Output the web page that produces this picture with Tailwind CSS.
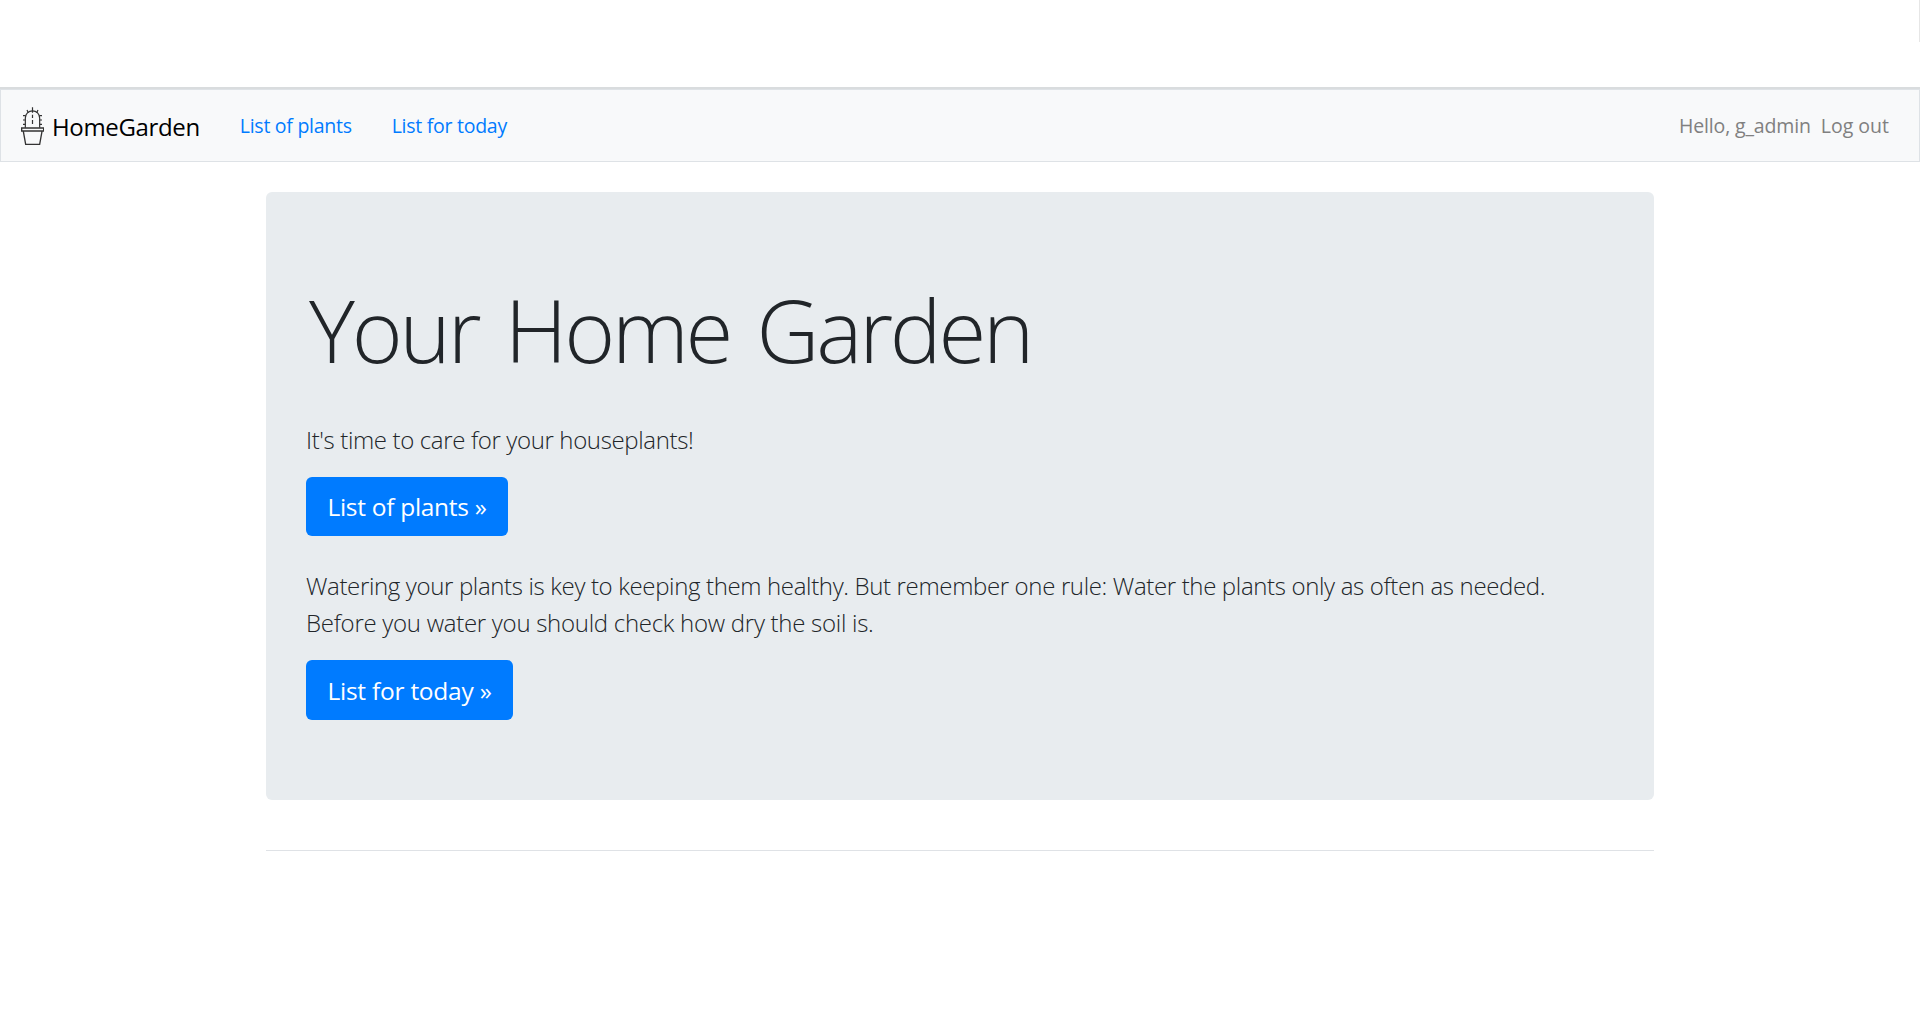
<!DOCTYPE html>
<html lang="en">
<head>
<meta charset="utf-8">
<title>HomeGarden</title>
<script src="https://cdn.jsdelivr.net/npm/@tailwindcss/browser@4"></script>
</head>
<body class="h-[1030px] overflow-hidden bg-white font-['Open_Sans',sans-serif] text-[#212529]">
<div class="flex h-[87px] items-start justify-end"><div class="h-[42px] w-px bg-[#e6e6e6]"></div></div>
<header class="border-t-2 border-[#d9dcde]">
  <nav class="flex h-[73px] items-center border border-[#dee2e6] bg-[#f8f9fa] pr-[30px] pl-[18px]">
    <a class="flex items-center text-black" href="#">
      <svg class="mt-px h-[38px] w-[25px]" viewBox="12 18 75 114" fill="none" stroke="#333" stroke-width="3.6">
        <path d="M31 80V51a21 21 0 0 1 43 0V80"/>
        <path d="M52.500 19v16M52.500 41v10M52.500 57v12M36 27l4 8M69 27l-4 8M24 44h8M73 44h8M24 57h7M74 57h7M24 70h7M74 70h7"/>
        <path d="M20 81h66v9H20zM25 91l7 39h42l7-39" stroke-width="4"/>
      </svg>
      <span class="ml-[8px] pt-[2px] text-[24px] leading-[38px] tracking-[-0.35px]">HomeGarden</span>
    </a>
    <a class="ml-[40px] text-[19.5px] leading-[30px] tracking-[-0.27px] text-[#007bff]" href="#">List of plants</a>
    <a class="ml-[40px] text-[19.5px] leading-[30px] tracking-[-0.27px] text-[#007bff]" href="#">List for today</a>
    <div class="ml-auto flex gap-[10px] text-[19.5px] leading-[30px] text-[#808080]">
      <span class="tracking-[-0.15px]">Hello, g_admin</span>
      <a href="#">Log out</a>
    </div>
  </nav>
</header>
<main class="mx-auto mt-[30px] w-[1388px]">
  <section class="h-[608px] rounded-[6px] bg-[#e8ecef] px-10 pt-[77px]">
    <h1 class="pl-[3px] text-[87px] leading-[120px] font-light tracking-[-3.2px] [word-spacing:7px]">Your Home Garden</h1>
    <p class="mt-[32px] text-[24px] leading-[37px] font-light tracking-[-0.36px]">It's time to care for your houseplants!</p>
    <a class="mt-[19px] flex h-[59px] w-[202px] items-center justify-center rounded-[6px] bg-[#007bff] pt-[2px] text-[24.5px] tracking-[-0.29px] text-white" href="#">List of plants »</a>
    <p class="mt-[31px] text-[24px] leading-[37px] font-light whitespace-nowrap"><span class="tracking-[-0.35px]">Watering your plants is key to keeping them healthy. But remember one rule: Water the plants only as often as needed.</span><br><span class="tracking-[-0.28px]">Before you water you should check how dry the soil is.</span></p>
    <a class="mt-[19px] flex h-[60px] w-[207px] items-center justify-center rounded-[6px] bg-[#007bff] pt-[2px] text-[24.5px] tracking-[-0.24px] text-white" href="#">List for today »</a>
  </section>
  <hr class="mt-[50px] border-[#dfe2e6]">
</main>
</body>
</html>
